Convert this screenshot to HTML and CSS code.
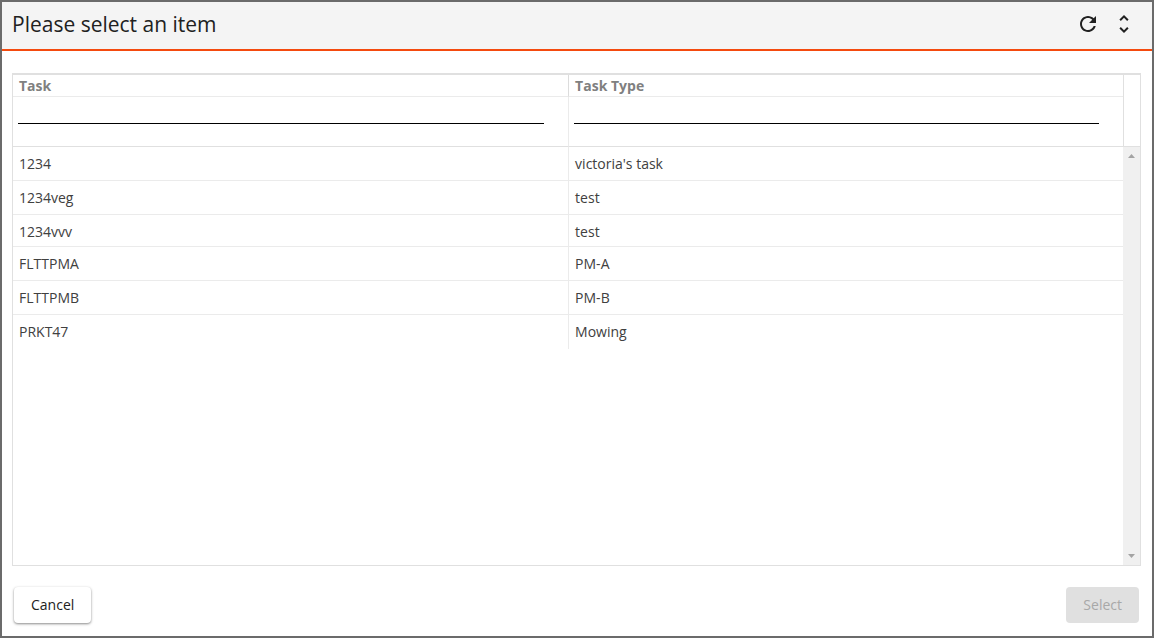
FILE: index.html
```html
<!DOCTYPE html>
<html lang="en">
<head>
<meta charset="utf-8">
<title>Please select an item</title>
<link rel="stylesheet" href="styles.css">
</head>
<body>
<div class="dialog" role="dialog" aria-labelledby="dialog-title">
  <header class="dialog-header">
    <h1 class="dialog-title" id="dialog-title">Please select an item</h1>
    <button class="icon-button" type="button" aria-label="Refresh">
      <svg viewBox="0 0 24 24" width="24" height="24" aria-hidden="true"><path d="M17.65 6.35C16.2 4.9 14.21 4 12 4c-4.42 0-7.99 3.58-7.99 8s3.57 8 7.99 8c3.73 0 6.84-2.55 7.73-6h-2.08c-.82 2.33-3.04 4-5.65 4-3.31 0-6-2.69-6-6s2.69-6 6-6c1.66 0 3.14.69 4.22 1.78L13 11h7V4l-2.35 2.35z"/></svg>
    </button>
    <button class="icon-button" type="button" aria-label="Expand">
      <svg viewBox="0 0 24 24" width="24" height="24" aria-hidden="true"><path d="M12 5.83L15.17 9l1.41-1.41L12 3 7.41 7.59 8.83 9 12 5.83zm0 12.34L8.83 15l-1.41 1.41L12 21l4.59-4.59L15.17 15 12 18.17z"/></svg>
    </button>
  </header>
  <main class="dialog-body">
    <div class="grid">
      <table class="grid-table">
        <thead>
          <tr class="heading-row"><th scope="col">Task</th><th scope="col">Task Type</th></tr>
          <tr class="filter-row">
            <td><input class="filter-input" type="text" aria-label="Filter Task"></td>
            <td><input class="filter-input" type="text" aria-label="Filter Task Type"></td>
          </tr>
        </thead>
        <tbody>
          <tr><td>1234</td><td>victoria's task</td></tr>
          <tr><td>1234veg</td><td>test</td></tr>
          <tr class="compact"><td>1234vvv</td><td>test</td></tr>
          <tr><td>FLTTPMA</td><td>PM-A</td></tr>
          <tr><td>FLTTPMB</td><td>PM-B</td></tr>
          <tr><td>PRKT47</td><td>Mowing</td></tr>
        </tbody>
      </table>
      <div class="grid-side">
        <div class="side-head"></div>
        <div class="scroll-track">
          <svg viewBox="0 0 7 4" width="7" height="4" aria-hidden="true"><path d="M0 4L3.5 0 7 4z"/></svg>
          <svg viewBox="0 0 7 4" width="7" height="4" aria-hidden="true"><path d="M0 0h7L3.5 4z"/></svg>
        </div>
      </div>
    </div>
  </main>
  <footer class="dialog-footer">
    <button class="button" type="button">Cancel</button>
    <button class="button" type="button" disabled>Select</button>
  </footer>
</div>
</body>
</html>
```
FILE: styles.css
```css
* {
  box-sizing: border-box;
}

body {
  margin: 0;
  height: 100vh;
  padding: 2px;
  background: #6b6b6b;
  font: 14px/20px "Open Sans", sans-serif;
  color: #404040;
}

.dialog {
  display: flex;
  flex-direction: column;
  height: 100%;
  background: #fff;
}

.dialog-header {
  display: flex;
  align-items: center;
  height: 49px;
  padding: 0 16px 3px 10px;
  gap: 12px;
  background: #f4f4f4;
  border-bottom: 2px solid #f44a0e;
}

.dialog-title {
  flex: 1;
  margin: 0;
  font-size: 21px;
  font-weight: 500;
  line-height: 32px;
  color: #212121;
}

.icon-button {
  display: flex;
  padding: 0;
  border: 0;
  background: none;
  fill: #212121;
}

.dialog-body {
  flex: 1;
  display: flex;
  padding: 22px 11px 0 10px;
}

.grid {
  flex: 1;
  display: flex;
  align-items: stretch;
  border: 1px solid #e0e0e0;
  border-top-width: 2px;
}

.grid-table {
  flex: 1;
  align-self: flex-start;
  table-layout: fixed;
  border-collapse: separate;
  border-spacing: 0;
}

.grid-table th,
.grid-table td {
  padding: 0 6px;
  text-align: left;
  border-bottom: 1px solid #ebebeb;
  border-right: 1px solid #ebebeb;
}

.grid-table th:last-child,
.grid-table td:last-child {
  border-right: 0;
}

.grid-table tbody tr:last-child td {
  border-bottom: 0;
}

.grid-table th {
  height: 22px;
  font-weight: 700;
  color: #808080;
  border-right-color: #dcdcdc;
}

.grid-table th:first-child {
  width: 50.1%;
}

.grid-table .filter-row td {
  height: 50px;
  padding: 3px 24px 0 5px;
  vertical-align: top;
  border-bottom-color: #e0e0e0;
}

.grid-table tbody td {
  height: 34px;
  padding-top: 7px;
  vertical-align: top;
}

.grid-table tbody .compact td {
  height: 32px;
}

.filter-input {
  display: block;
  width: 100%;
  height: 24px;
  padding: 0;
  border: 0;
  border-bottom: 1px solid #000;
  background: none;
  font: inherit;
}

.grid-side {
  display: flex;
  flex-direction: column;
  width: 17px;
}

.side-head {
  height: 72px;
  border-left: 1px solid #e0e0e0;
  border-bottom: 1px solid #e0e0e0;
}

.scroll-track {
  flex: 1;
  display: flex;
  flex-direction: column;
  align-items: center;
  justify-content: space-between;
  padding: 7px 0;
  background: #f0f0f0;
  fill: #a3a3a3;
}

.dialog-footer {
  display: flex;
  justify-content: space-between;
  padding: 21px 13px 13px 12px;
}

.button {
  height: 36px;
  padding: 0 17px;
  border: 0;
  border-radius: 4px;
  background: #fff;
  box-shadow: 0 1px 3px rgba(0, 0, 0, 0.3), 0 1px 2px rgba(0, 0, 0, 0.2);
  font: 500 14px/36px "Open Sans", sans-serif;
  color: #212121;
}

.button:disabled {
  background: #e0e0e0;
  box-shadow: none;
  color: #a8a8a8;
}
```
